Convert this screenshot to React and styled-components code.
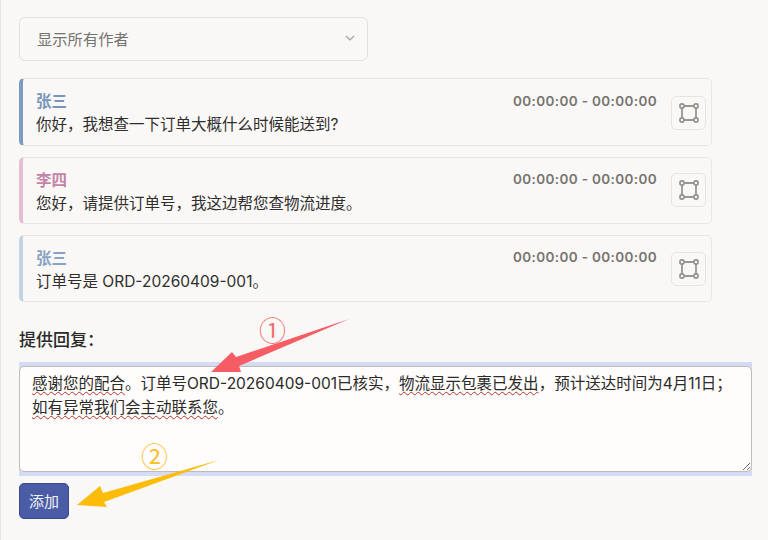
import React from 'react';
import styled, { createGlobalStyle } from 'styled-components';

const GlobalStyle = createGlobalStyle`
    html, body {
        margin: 0;
        padding: 0;
        height: 100%;
        overflow: hidden;
        background: #f9f8f7;
    }
`;

const Page = styled.div`
    position: relative;
    box-sizing: border-box;
    width: 768px;
    height: 540px;
    padding: 17px 16px 0 18px;
    overflow: hidden;
    border-left: 1px solid #e6e5e3;
    font-family: Inter, "Noto Sans CJK SC", sans-serif;
    color: #2b2a28;
`;

const Select = styled.div`
    box-sizing: border-box;
    display: flex;
    align-items: center;
    justify-content: space-between;
    width: 349px;
    height: 44px;
    padding: 0 11px 2px 17px;
    background: #f9f8f7;
    border: 1px solid #e2e1de;
    border-radius: 6px;
    font-size: 15.3px;
    color: #74726e;
`;

const Cards = styled.div`
    display: flex;
    flex-direction: column;
    gap: 11px;
    width: 693px;
    margin-top: 17px;
`;

const Card = styled.div`
    box-sizing: border-box;
    display: flex;
    justify-content: space-between;
    height: ${(p) => p.$height}px;
    padding: 11px 5px 0 13px;
    background: #f9f8f7;
    border: 1px solid #e8e7e4;
    border-left: 4px solid ${(p) => p.$accent};
    border-radius: 5px;
`;

const CardBody = styled.div`
    display: flex;
    flex-direction: column;
`;

const Author = styled.div`
    font-size: 15.5px;
    font-weight: 700;
    line-height: 24px;
    color: ${(p) => p.$color};
`;

const Message = styled.div`
    font-size: 15.5px;
    line-height: 22px;
    color: #2f2e2c;
`;

const CardSide = styled.div`
    display: flex;
    align-items: flex-start;
    gap: 14px;
`;

const Time = styled.div`
    margin-top: ${(p) => p.$top}px;
    font-size: 13.5px;
    font-weight: 600;
    line-height: 20px;
    letter-spacing: 0.36px;
    color: #76746f;
`;

const IconButton = styled.div`
    display: flex;
    align-items: center;
    justify-content: center;
    box-sizing: border-box;
    width: 35px;
    height: 34px;
    margin-top: ${(p) => p.$top}px;
    background: #f9f8f7;
    border: 1px solid #e6e5e2;
    border-radius: 5px;
`;

const ReplyLabel = styled.div`
    margin-top: 26px;
    font-size: 17px;
    font-weight: 500;
    line-height: 24px;
    color: #2b2a28;
`;

const EditorBand = styled.div`
    margin-top: 10px;
    padding: 4px 0;
    width: 733px;
    background: #d6dbf4;
`;

const Editor = styled.div`
    box-sizing: border-box;
    height: 106px;
    padding: 5px 12px;
    background: #fefdfc;
    border: 1px solid #bdbcb9;
    border-radius: 5px;
    font-size: 15.5px;
    line-height: 24px;
    color: #2b2a28;
    overflow: auto;
    resize: vertical;
`;

const Misspelt = styled.span`
    text-decoration: underline wavy #b3302c 1.3px;
    text-underline-offset: 2px;
`;

const AddButton = styled.button`
    display: block;
    box-sizing: border-box;
    width: 50px;
    height: 36px;
    margin-top: 7px;
    padding: 0 0 2px;
    background: #4a5ca6;
    border: 1px solid #3b4a8c;
    border-radius: 5px;
    font-family: inherit;
    font-size: 15px;
    color: #f2f3f8;
`;

const Overlay = styled.svg`
    position: absolute;
    left: 0;
    top: 0;
    pointer-events: none;
`;

const Marker = styled.text`
    font-family: "Noto Sans CJK SC", sans-serif;
    font-size: 27px;
    font-weight: 400;
`;

const Chevron = () => (
    <svg width="12" height="12" viewBox="0 0 12 12" fill="none" stroke="#a3a19c" strokeWidth="1.2">
        <path d="M2 4l4 4 4-4" />
    </svg>
);

const NodesIcon = () => (
    <svg width="20" height="20" viewBox="0 0 20 20" fill="none" stroke="#98968f" strokeWidth="1.8">
        <path d="M5 3h10M5 17h10M3 5v10M17 5v10" />
        <rect x="1" y="1" width="4" height="4" rx="1.500" />
        <rect x="15" y="1" width="4" height="4" rx="1.500" />
        <rect x="1" y="15" width="4" height="4" rx="1.500" />
        <rect x="15" y="15" width="4" height="4" rx="1.500" />
    </svg>
);

const messages = [
    { author: '张三', text: '你好，我想查一下订单大概什么时候能送到?', accent: '#7b9cc0', color: '#7896bb', height: 68, top: 6, timeTop: 1 },
    { author: '李四', text: '您好，请提供订单号，我这边帮您查物流进度。', accent: '#e2bfd2', color: '#c283a7', height: 67, top: 4, timeTop: 0 },
    { author: '张三', text: '订单号是 ORD-20260409-001。', accent: '#c3d3e3', color: '#89a3c4', height: 67, top: 5, timeTop: 0 },
];

export default function App() {
    return (
        <Page>
            <GlobalStyle />
            <Select>
                <span>显示所有作者</span>
                <Chevron />
            </Select>
            <Cards>
                {messages.map((m, i) => (
                    <Card key={i} $accent={m.accent} $height={m.height}>
                        <CardBody>
                            <Author $color={m.color}>{m.author}</Author>
                            <Message>{m.text}</Message>
                        </CardBody>
                        <CardSide>
                            <Time $top={m.timeTop}>00:00:00 - 00:00:00</Time>
                            <IconButton $top={m.top}>
                                <NodesIcon />
                            </IconButton>
                        </CardSide>
                    </Card>
                ))}
            </Cards>
            <ReplyLabel>提供回复：</ReplyLabel>
            <EditorBand>
                <Editor>
                    <Misspelt>感谢您的配合</Misspelt>。订单号ORD-20260409-001已核实，<Misspelt>物流显示包裹已发出</Misspelt>，预计送达时间为4月11日；<Misspelt>如有异常我们会主动联系您</Misspelt>。
                </Editor>
            </EditorBand>
            <AddButton>添加</AddButton>
            <Overlay width="768" height="540" viewBox="0 0 768 540">
                <Marker x="258" y="341" fill="#f2706e">①</Marker>
                <polygon points="348,319 235,357 231,352 210,372 240,372 238,366" fill="#f65c63" />
                <Marker x="140" y="467" fill="#fbc02d">②</Marker>
                <polygon points="218,460 102,493 99,486 76,505 106,507 103,502" fill="#fdbb0a" />
            </Overlay>
        </Page>
    );
}
